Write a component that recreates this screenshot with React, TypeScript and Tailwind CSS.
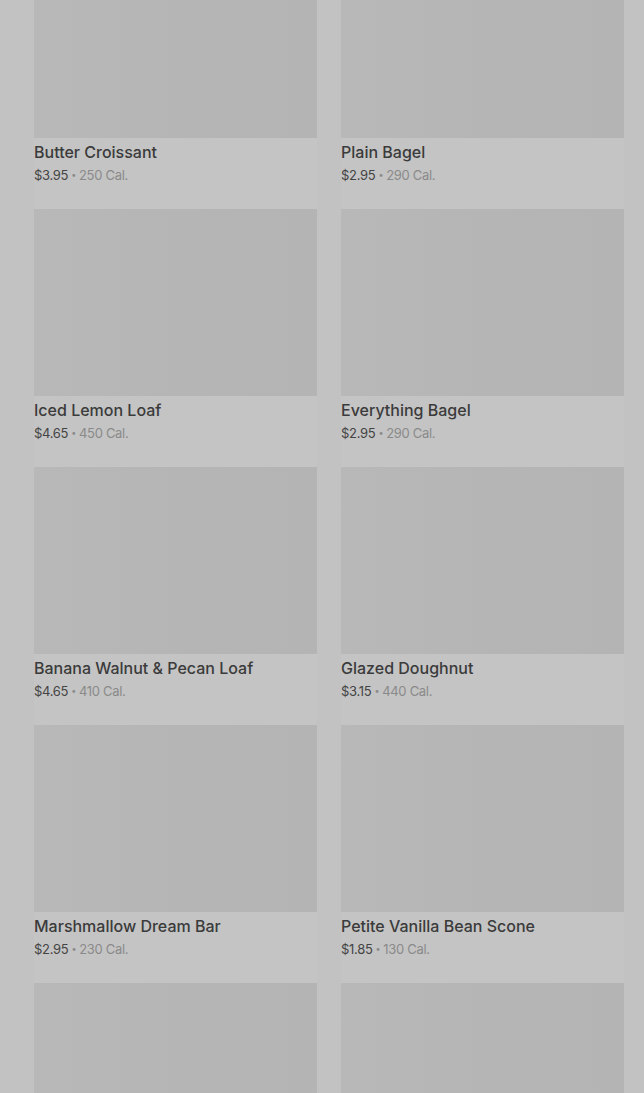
import React from "react";

const items = [
  { name: "Butter Croissant", price: "$3.95", cal: "250 Cal." },
  { name: "Plain Bagel", price: "$2.95", cal: "290 Cal." },
  { name: "Iced Lemon Loaf", price: "$4.65", cal: "450 Cal." },
  { name: "Everything Bagel", price: "$2.95", cal: "290 Cal." },
  { name: "Banana Walnut & Pecan Loaf", price: "$4.65", cal: "410 Cal." },
  { name: "Glazed Doughnut", price: "$3.15", cal: "440 Cal." },
  { name: "Marshmallow Dream Bar", price: "$2.95", cal: "230 Cal." },
  { name: "Petite Vanilla Bean Scone", price: "$1.85", cal: "130 Cal." },
  { name: "", price: "", cal: "" },
  { name: "", price: "", cal: "" },
];

export default function App() {
  return (
    <div
      className="w-[644px] h-[1093px] overflow-hidden bg-[#c2c2c2]"
      style={{ fontFamily: "Inter, 'Noto Sans', sans-serif" }}
    >
      <div className="-mt-[49px] pl-[34px] pr-[20px] grid grid-cols-2 gap-x-[24px] gap-y-0">
        {items.map((it, i) => (
          <div key={i} className="flex flex-col h-[258px] bg-[#c4c4c4]">
            <div className="h-[187px] bg-gradient-to-r from-[#b8b8b8] via-[#b5b5b5] to-[#b4b4b4]" />
            {it.name && (
              <div className="pt-[4px]">
                <div className="text-[16px] leading-[20px] font-medium text-[#3b3b3b] tracking-[0px]">
                  {it.name}
                </div>
                <div className="mt-[4px] text-[13px] leading-[18px] tracking-[-0.3px] flex items-center">
                  <span className="text-[#444444]">{it.price}</span>
                  <span className="text-[#8a8a8a] text-[9px] mx-[3px]">•</span>
                  <span className="text-[#8a8a8a]">{it.cal}</span>
                </div>
              </div>
            )}
          </div>
        ))}
      </div>
    </div>
  );
}
